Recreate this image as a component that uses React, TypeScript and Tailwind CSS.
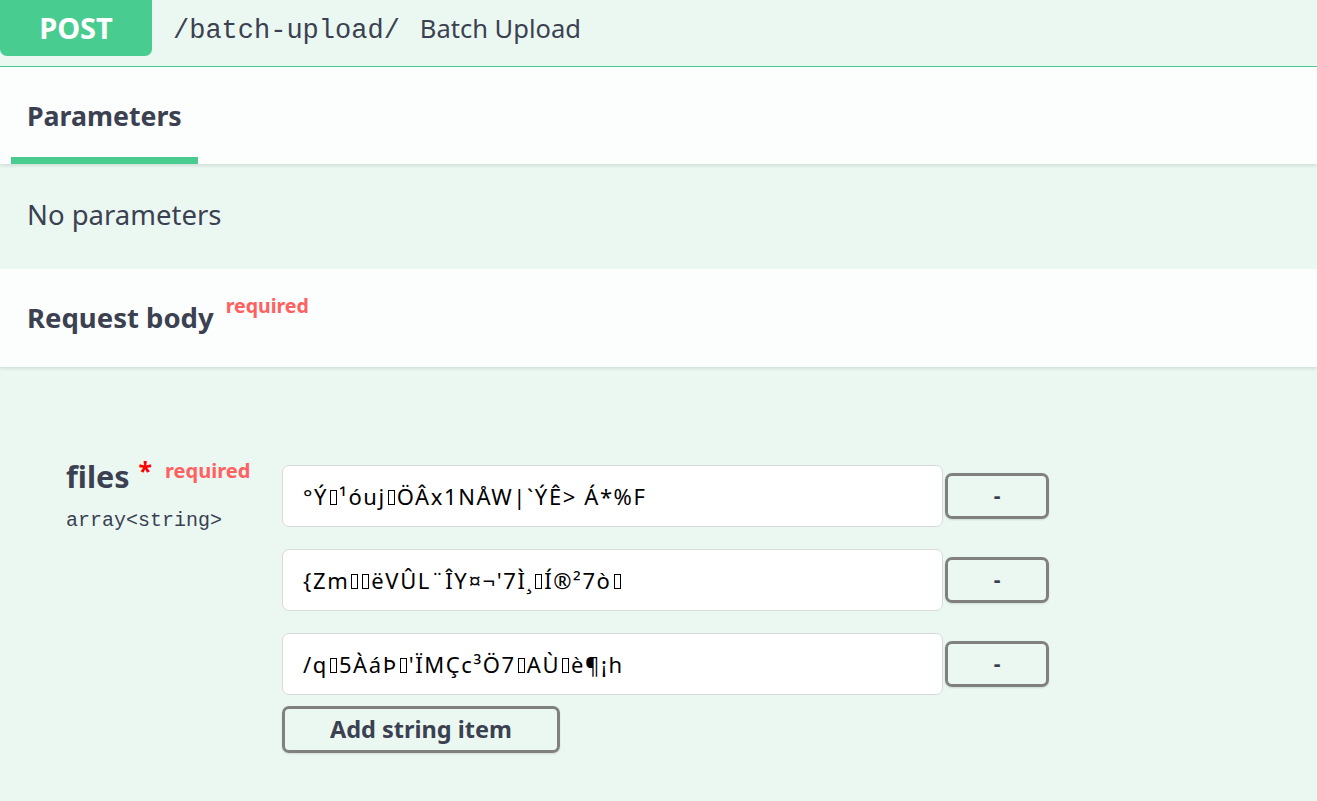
import React from "react";

const sans = "font-['Noto_Sans',_'Open_Sans',_sans-serif]";
const mono = "font-['Liberation_Mono',_'DejaVu_Sans_Mono',_monospace]";

// "\u0000" marks a byte that has no glyph and is drawn as an empty box
const items = [
  "°Ý\u0000¹óuj\u0000ÖÂx1NÅW|`ÝÊ> Á*%F",
  "{Zm\u0000\u0000ëVÛL¨ÎY¤¬'7Ì¸\u0000Í®²7ò\u0000",
  "/q\u00005ÀáÞ\u0000'ÏMÇc³Ö7\u0000AÙ\u0000è¶¡h",
];

function Garbled({ text }: { text: string }) {
  const parts = text.split("\u0000");
  return (
    <>
      {parts.map((p, i) => (
        <React.Fragment key={i}>
          {p}
          {i < parts.length - 1 && (
            <span className="inline-block w-[7px] h-[15px] border border-black mx-[2px] align-[0px]" />
          )}
        </React.Fragment>
      ))}
    </>
  );
}

function StringItem({ value }: { value: string }) {
  return (
    <div className="flex items-center gap-[2px]">
      <div
        className={`${sans} w-[661px] h-[62px] bg-white border border-[#d9d9d9] rounded-[7px] pl-[20px] flex items-center text-[22px] tracking-[1.6px] text-black whitespace-pre`}
      >
        <span>
          <Garbled text={value} />
        </span>
      </div>
      <button
        className={`${sans} w-[104px] h-[46px] border-[3px] border-[#808080] rounded-[7px] text-[21px] font-bold text-[#3b4151] shadow-[0_1px_2px_rgba(0,0,0,0.12)]`}
      >
        -
      </button>
    </div>
  );
}

export default function App() {
  return (
    <div className={`${sans} w-[1317px] h-[801px] overflow-hidden bg-[#ebf8f2] text-[#3b4151]`}>
      {/* operation summary bar */}
      <div className="h-[67px] flex items-start border-b border-[#49cc90]">
        <div className="w-[152px] h-[56px] bg-[#49cc90] rounded-b-[7px] flex items-center justify-center text-white font-bold text-[29px]">
          POST
        </div>
        <div className="flex items-center h-[56px] ml-[21px]">
          <span className={`${mono} text-[27px] text-[#3b4151] mt-[6px]`}>/batch-upload/</span>
          <span className="ml-[20px] text-[25.5px] text-[#3b4151]">Batch Upload</span>
        </div>
      </div>

      {/* parameters tab header */}
      <div className="h-[97px] bg-[#fbfefd] shadow-[0_2px_3px_rgba(0,0,0,0.1)] relative flex items-end">
        <div className="ml-[11px] w-[187px] flex flex-col">
          <span className="pl-[16px] font-bold text-[26.7px] pb-[21px]">Parameters</span>
          <div className="h-[7px] bg-[#49cc90]" />
        </div>
      </div>

      <div className="h-[105px] flex items-center pl-[27px] pb-[4px] text-[27.5px]">No parameters</div>

      {/* request body header */}
      <div className="h-[98px] bg-[#fbfefd] shadow-[0_2px_3px_rgba(0,0,0,0.1)] relative flex items-center pl-[27px]">
        <span className="font-bold text-[27.5px]">Request body</span>
        <span className="ml-[12px] -mt-[24px] text-[19.5px] font-bold text-[#ff6060]">required</span>
      </div>

      {/* form body */}
      <div className="flex pt-[83px] pl-[66px]">
        <div className="w-[216px]">
          <div className="whitespace-nowrap leading-[40px]">
            <span className="font-bold text-[30.5px]">files</span>
            <span className="ml-[9px] text-[25px] font-bold text-[#ff0000] align-[8px]">*</span>
            <span className="ml-[13px] text-[20px] font-bold text-[#ff6060] align-[10px]">required</span>
          </div>
          <div className={`${mono} text-[20px] mt-[4px]`}>array&lt;string&gt;</div>
        </div>
        <div className="flex flex-col gap-[22px] pt-[15px]">
          {items.map((v, i) => (
            <StringItem key={i} value={v} />
          ))}
          <button
            className={`${sans} -mt-[11px] w-[278px] h-[47px] border-[3px] border-[#808080] rounded-[7px] text-[23.5px] font-bold text-[#3b4151] shadow-[0_1px_2px_rgba(0,0,0,0.12)]`}
          >
            Add string item
          </button>
        </div>
      </div>
    </div>
  );
}
